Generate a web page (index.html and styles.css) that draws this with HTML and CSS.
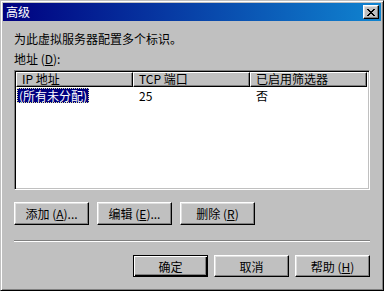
FILE: index.html
```html
<!DOCTYPE html>
<html lang="zh-CN">
<head>
    <meta charset="UTF-8">
    <title>高级</title>
    <link rel="stylesheet" href="styles.css">
</head>
<body>
    <div class="window">
        <div class="titlebar">
            <span class="title">高级</span>
            <button class="close-btn">
                <svg width="8" height="7" viewBox="0 0 8 7">
                    <path d="M0 0h2v1h1v1h2v-1h1v-1h2v1h-1v1h-1v1h-1v1h1v1h1v1h1v1h-2v-1h-1v-1h-2v1h-1v1h-2v-1h1v-1h1v-1h1v-1h-1v-1h-1v-1h-1z" fill="#000"/>
                </svg>
            </button>
        </div>

        <div class="content">
            <p class="intro">为此虚拟服务器配置多个标识。</p>
            <p class="label">地址 (<u>D</u>):</p>

            <div class="listview">
                <div class="list-header">
                    <div class="col-head">IP 地址</div>
                    <div class="col-head">TCP 端口</div>
                    <div class="col-head">已启用筛选器</div>
                </div>
                <div class="list-row">
                    <div class="cell"><span class="selected">(所有未分配)</span></div>
                    <div class="cell">25</div>
                    <div class="cell">否</div>
                </div>
            </div>

            <div class="btn-row">
                <button class="btn">添加 (<u>A</u>)...</button>
                <button class="btn">编辑 (<u>E</u>)...</button>
                <button class="btn">删除 (<u>R</u>)</button>
            </div>

            <div class="separator"></div>

            <div class="btn-row footer">
                <button class="btn default">确定</button>
                <button class="btn">取消</button>
                <button class="btn">帮助 (<u>H</u>)</button>
            </div>
        </div>
    </div>
</body>
</html>
```

FILE: styles.css
```css
/* Reset */
* {
    margin: 0;
    padding: 0;
    box-sizing: border-box;
}
body {
    font-family: "Noto Sans CJK SC", "DejaVu Sans", sans-serif;
    font-size: 12px;
    color: #000;
    background: #c0c0c0;
}

/* Window frame */
.window {
    width: 384px;
    height: 291px;
    background: #c0c0c0;
    border: 1px solid;
    border-color: #c0c0c0 #000 #000 #c0c0c0;
    box-shadow: inset 1px 1px #fff, inset -1px -1px #808080;
    padding: 2px;
}

/* Title bar */
.titlebar {
    height: 18px;
    background: linear-gradient(to right, #000080, #1084d0);
    display: flex;
    justify-content: space-between;
    align-items: flex-start;
    padding: 2px 2px 0 3px;
}
.title {
    color: #fff;
    font-size: 12px;
    line-height: 14px;
}
.close-btn {
    width: 16px;
    height: 14px;
    background: #c0c0c0;
    border: 1px solid;
    border-color: #fff #000 #000 #fff;
    box-shadow: inset -1px -1px #808080, inset 1px 1px #dfdfdf;
    display: flex;
    align-items: center;
    justify-content: center;
    padding-top: 1px;
}

/* Content */
.content {
    padding: 0 11px;
}
.intro {
    margin-top: 11px;
    line-height: 14px;
}
.label {
    margin-top: 6px;
    line-height: 14px;
}
u {
    text-decoration: underline;
}

/* List view */
.listview {
    margin-top: 4px;
    height: 120px;
    background: #fff;
    border: 1px solid;
    border-color: #808080 #fff #fff #808080;
    box-shadow: inset 1px 1px #000, inset -1px -1px #c0c0c0;
    padding: 1px;
}
.list-header {
    display: grid;
    grid-template-columns: 117px 117px 117px;
    height: 15px;
    background: #c0c0c0;
    margin-right: 1px;
}
.col-head {
    border: 1px solid;
    border-color: #fff #000 #000 #fff;
    box-shadow: inset -1px -1px #808080;
    padding-left: 5px;
    line-height: 12px;
}
.list-row {
    display: grid;
    grid-template-columns: 117px 117px 117px;
    margin-top: 1px;
    height: 15px;
    line-height: 15px;
}
.cell {
    padding-left: 6px;
}
.list-row .cell:first-child {
    padding-left: 1px;
}
.selected {
    display: inline-block;
    vertical-align: top;
    background: #000080;
    color: #fff;
    border: 1px dotted #e0e0a0;
    padding: 0 1px;
    height: 15px;
    line-height: 13px;
}

/* Buttons */
.btn-row {
    display: flex;
    gap: 8px;
    margin-top: 12px;
}
.btn {
    width: 75px;
    height: 23px;
    font-family: inherit;
    font-size: 12px;
    background: #c0c0c0;
    border: 1px solid;
    border-color: #fff #000 #000 #fff;
    box-shadow: inset -1px -1px #808080, inset 1px 1px #dfdfdf;
    color: #000;
}
.btn.default {
    border: 1px solid #000;
    box-shadow: inset 1px 1px #fff, inset -1px -1px #000, inset -2px -2px #808080;
}
.separator {
    margin-top: 15px;
    border-top: 1px solid #808080;
    border-bottom: 1px solid #fff;
}
.footer {
    margin-top: 13px;
    justify-content: flex-end;
    gap: 6px;
}
.footer .btn {
    height: 22px;
}
```
